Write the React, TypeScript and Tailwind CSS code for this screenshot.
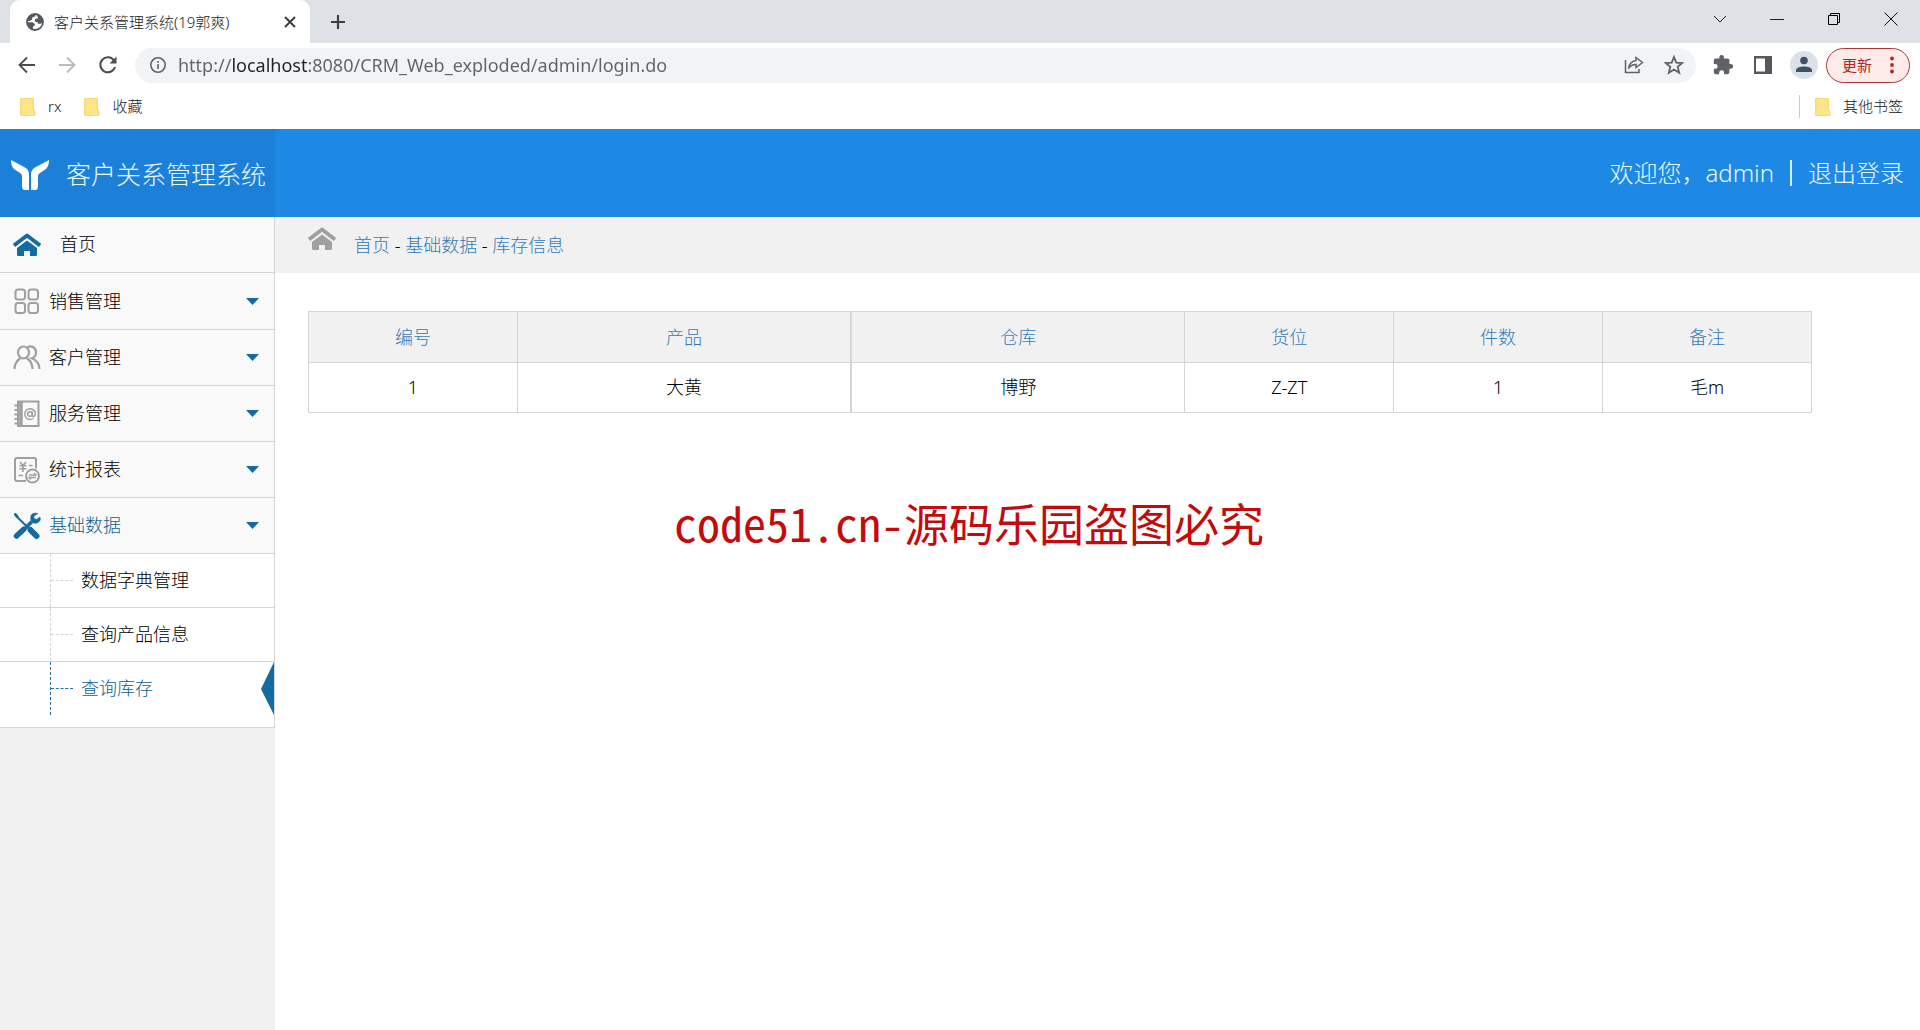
import React, { useState } from 'react';

type IconProps = { className?: string };

function GlobeIcon() {
  return (
    <svg viewBox="0 0 18 18" className="h-[18px] w-[18px] shrink-0" fill="none">
      <circle cx="9" cy="9" r="8" stroke="#55595e" strokeWidth="1.8" />
      <path d="M10 1.2 9 3.5 6.5 4.2 6 6.5 3.8 8 1.2 8 2 4.5 5.5 1.5Z" fill="#55595e" />
      <path d="M1.3 9.2 6.5 9.2 9 11 8.5 12.8 7 13.5 6.7 16.6 3 14.5Z" fill="#55595e" />
      <path d="M10.5 1.5 15 3.5 17 8 15.5 10.5 12.5 11 11.5 9.2 8.6 8.4 9.2 6 12.2 5.3Z" fill="#55595e" />
    </svg>
  );
}

function HouseIcon({ className }: IconProps) {
  return (
    <svg viewBox="0 0 28 24" className={className}>
      <path d="M1 12.500 14 2.500 27 12.500" fill="none" stroke="currentColor" strokeWidth="3.8" strokeLinejoin="round" />
      <path d="M14 7.500 24 15V21.5Q24 23 22.5 23H17V18H11V23H5.500Q4 23 4 21.500V15Z" fill="currentColor" />
    </svg>
  );
}

function GridIcon({ className }: IconProps) {
  return (
    <svg viewBox="0 0 28 28" className={className} fill="none" stroke="currentColor" strokeWidth="2">
      <rect x="2.500" y="1.500" width="9.500" height="10" rx="2.500" />
      <rect x="15.500" y="1.500" width="9.500" height="10" rx="2.500" />
      <rect x="2.500" y="15" width="9.500" height="10" rx="2.500" />
      <rect x="15.500" y="15" width="9.500" height="10" rx="2.500" />
    </svg>
  );
}

function PeopleIcon({ className }: IconProps) {
  return (
    <svg viewBox="0 0 28 28" className={className} fill="none" stroke="currentColor" strokeWidth="2.200">
      <ellipse cx="10.500" cy="8.500" rx="5.500" ry="6" />
      <path d="M1.500 25C1.500 20 3.500 17 7 14.500M14 14.500C18 17 19.500 20 19.500 25" />
      <path d="M14.500 3.200C19 .8 23 4 23 8.500 23 11.500 21.500 13.500 19 14.200 24 16.500 26.500 20 26.500 25" />
    </svg>
  );
}

function BookIcon({ className }: IconProps) {
  return (
    <svg viewBox="0 0 28 28" className={className} fill="none" stroke="currentColor">
      <rect x="5" y="1.500" width="20.500" height="24.500" strokeWidth="2" />
      <path d="M8 2V26" strokeWidth="3.500" />
      <path d="M1.500 5.500H7M1.500 10H7M1.500 14.500H7M1.500 19H7M1.500 23.500H7" strokeWidth="2.200" />
      <circle cx="17" cy="14" r="2.300" strokeWidth="1.500" />
      <path d="M19.300 11.500V15Q19.500 17 21 16.500 23 14.500 22 11.500 20 8.500 16.500 8.700 12 9.500 11.800 14 12 18.800 16.500 19.500 19 19.500 20.500 18.500" strokeWidth="1.400" />
    </svg>
  );
}

function ReportIcon({ className }: IconProps) {
  return (
    <svg viewBox="0 0 28 28" className={className} fill="none" stroke="currentColor" strokeWidth="2">
      <path d="M13 25H4Q2 25 2 23V4Q2 2 4 2H21Q23 2 23 4V12.500" />
      <path d="M7 6 10 9.500 13 6M6.500 9.800H13.500M6.500 12.800H13.500M10 9.500V16M16 9.500H19.500M5.500 19.500H10" strokeWidth="1.600" />
      <circle cx="19.500" cy="20" r="6.500" />
      <path d="M16 19H23L21 17M23 21.500H16L18 23.500" strokeWidth="1.300" />
    </svg>
  );
}

function ToolsIcon({ className }: IconProps) {
  return (
    <svg viewBox="0 0 28 28" className={className} fill="none" stroke="currentColor">
      <path d="M2 3 16 16.500" strokeWidth="2" />
      <path d="M1 2 3 1.500 5.500 5 4.500 6Z" fill="currentColor" strokeWidth="1" />
      <path d="M17.500 18 23.500 24" strokeWidth="6" strokeLinecap="round" />
      <path d="M3.500 24 10.500 17.500" strokeWidth="5.500" strokeLinecap="round" />
      <path d="M11 17.500 19 9.500" strokeWidth="3.500" />
      <path d="M25 1.500Q20 0 18 3.500 17 6 18 8.500L20.500 11Q25 12 27 8.500 27.800 6.500 27 5L23.500 7.500 21 6.500 21 4Z" fill="currentColor" strokeWidth=".5" />
    </svg>
  );
}

function FolderIcon() {
  return (
    <svg viewBox="0 0 16 20" className="h-5 w-4 shrink-0">
      <path d="M0 2Q0 1 1 1H13Q14 1 14 2V12L15.500 14.500V17.500Q15.500 19 14 19H1.500Q0 19 0 17.500Z" fill="#f7dc76" />
      <path d="M1.500 2H12.500V18H1.500Z" fill="#fee58a" />
      <path d="M13 14V18" stroke="#fff3b5" />
    </svg>
  );
}

const menus = [
  { label: '销售管理', icon: GridIcon },
  { label: '客户管理', icon: PeopleIcon },
  { label: '服务管理', icon: BookIcon },
  { label: '统计报表', icon: ReportIcon },
  { label: '基础数据', icon: ToolsIcon },
];

const subMenus = ['数据字典管理', '查询产品信息', '查询库存'];

const columns = ['编号', '产品', '仓库', '货位', '件数', '备注'];

const rows = [['1', '大黄', '博野', 'Z-ZT', '1', '毛m']];

function BrowserBar() {
  const [url, setUrl] = useState('http://localhost:8080/CRM_Web_exploded/admin/login.do');

  return (
    <div className="bg-white text-[15px] text-[#202124]">
      {/* Tab strip */}
      <div className="flex h-[43px] items-center bg-[#dee1e6] pl-[10px]">
        <div className="flex h-full w-[300px] items-center rounded-t-[10px] bg-white pr-[10px] pl-4">
          <GlobeIcon />
          <span className="ml-[10px] flex-1 pt-[2px] whitespace-nowrap">客户关系管理系统(19郭爽)</span>
          <button aria-label="关闭标签页" className="p-1">
            <svg viewBox="0 0 12 12" className="h-3 w-3" stroke="#3c4043" strokeWidth="2">
              <path d="M1 1 11 11M11 1 1 11" />
            </svg>
          </button>
        </div>
        <button aria-label="新标签页" className="ml-5">
          <svg viewBox="0 0 16 16" className="h-4 w-4" stroke="#3c4043" strokeWidth="2.200">
            <path d="M8 1V15M1 8H15" />
          </svg>
        </button>
        <div className="mr-[22px] ml-auto flex items-center gap-[43px] pb-[6px]">
          <button aria-label="搜索标签页">
            <svg viewBox="0 0 14 14" className="h-[14px] w-[14px]" fill="none" stroke="#202124">
              <path d="M1 4 7 10 13 4" />
            </svg>
          </button>
          <button aria-label="最小化">
            <svg viewBox="0 0 14 14" className="h-[14px] w-[14px]" stroke="#202124">
              <path d="M0 7.500H14" />
            </svg>
          </button>
          <button aria-label="还原">
            <svg viewBox="0 0 14 14" className="h-[14px] w-[14px]" fill="none" stroke="#000">
              <path d="M1.500 3.500H10.500V12.500H1.500ZM3.500 3.500V1.500H12.500V10.500H10.500" />
            </svg>
          </button>
          <button aria-label="关闭">
            <svg viewBox="0 0 14 14" className="h-[14px] w-[14px]" stroke="#000">
              <path d="M.5.500 13.500 13.500M13.500.500.5 13.500" />
            </svg>
          </button>
        </div>
      </div>

      {/* Address bar */}
      <div className="flex h-11 items-center pr-[10px] pl-[18px]">
        <button aria-label="后退">
          <svg viewBox="0 0 18 18" className="h-[18px] w-[18px]" fill="none" stroke="#4a4d51" strokeWidth="1.800">
            <path d="M17 9H2M9 1.500 1.500 9 9 16.500" />
          </svg>
        </button>
        <button aria-label="前进" className="ml-[22px]">
          <svg viewBox="0 0 18 18" className="h-[18px] w-[18px]" fill="none" stroke="#b9bbbe" strokeWidth="1.800">
            <path d="M1 9H16M9 1.500 16.500 9 9 16.500" />
          </svg>
        </button>
        <button aria-label="刷新" className="ml-[22px]">
          <svg viewBox="0 0 20 20" className="h-5 w-5" fill="none" stroke="#4a4d51" strokeWidth="2">
            <path d="M16 5.500A7.500 7.500 0 1 0 17 12" />
            <path d="M18.500 1.500V8.500H11.500Z" fill="#4a4d51" stroke="none" />
          </svg>
        </button>
        <div className="ml-[17px] flex h-[35px] flex-1 items-center rounded-full bg-[#f1f3f4] pr-3 pl-[14px]">
          <svg viewBox="0 0 18 18" className="h-[18px] w-[18px] shrink-0" fill="none" stroke="#5f6368" strokeWidth="1.600">
            <circle cx="9" cy="9" r="7.200" />
            <path d="M9 8V13M9 5V6.800" />
          </svg>
          {/* The host name is darker than the rest of the address */}
          <input
            type="text"
            aria-label="地址栏"
            value={url}
            onChange={(e) => setUrl(e.target.value)}
            className="ml-2 min-w-0 flex-1 bg-[linear-gradient(90deg,#5f6368_56px,#202124_56px,#202124_132px,#5f6368_132px)] bg-clip-text px-[3px] text-[18px] leading-[30px] font-normal text-transparent outline-none"
          />
          <button aria-label="分享">
            <svg viewBox="0 0 20 20" className="h-5 w-5" fill="none" stroke="#5f6368" strokeWidth="1.500">
              <path d="M1.500 5V17.500H15V14" />
              <path d="M12 2.500 18.500 7.500 12 12.500V9.500Q7 9.500 4.500 13.500 5.500 6.500 12 5.500Z" />
            </svg>
          </button>
          <button aria-label="收藏此页" className="ml-5">
            <svg viewBox="0 0 20 20" className="h-5 w-5" fill="none" stroke="#5f6368" strokeWidth="1.800">
              <path d="M10 2 12.300 7.600 18.300 8 13.700 11.900 15.200 17.700 10 14.500 4.800 17.700 6.300 11.900 1.700 8 7.700 7.600Z" />
            </svg>
          </button>
        </div>
        <button aria-label="扩展程序" className="ml-4">
          <svg viewBox="0 0 24 24" className="h-[22px] w-[22px]" fill="#5f6368">
            <path d="M20.500 11H19V7c0-1.100-.9-2-2-2h-4V3.500a2.500 2.500 0 0 0-5 0V5H4c-1.100 0-2 .9-2 2v3.800h1.500a2.700 2.700 0 0 1 0 5.400H2V20c0 1.100.9 2 2 2h3.800v-1.500a2.700 2.700 0 0 1 5.400 0V22H17c1.100 0 2-.9 2-2v-4h1.500a2.500 2.500 0 0 0 0-5z" />
          </svg>
        </button>
        <button aria-label="侧边栏" className="ml-5">
          <svg viewBox="0 0 18 18" className="h-[18px] w-[18px]">
            <path d="M0 0H18V18H0ZM2 2.500V15.500H11V2.500Z" fill="#55595e" fillRule="evenodd" />
          </svg>
        </button>
        <button aria-label="个人资料" className="ml-[18px]">
          <svg viewBox="0 0 28 28" className="h-7 w-7">
            <circle cx="14" cy="14" r="14" fill="#dce0e8" />
            <circle cx="14" cy="9.500" r="3.800" fill="#40506a" />
            <path d="M6 21V19Q6.500 15.500 14 15.500 21.500 15.500 22 19V21Z" fill="#40506a" />
          </svg>
        </button>
        <button className="ml-2 flex h-[35px] w-[84px] items-center justify-between rounded-full border border-[#a83a36] bg-[#fcebe9] px-[15px] text-[15px] font-normal text-[#b3261e]">
          更新
          <svg viewBox="0 0 4 18" className="h-[18px] w-1" fill="#b3261e">
            <circle cx="2" cy="2.500" r="1.900" />
            <circle cx="2" cy="9" r="1.900" />
            <circle cx="2" cy="15.500" r="1.900" />
          </svg>
        </button>
      </div>

      {/* Bookmarks */}
      <div className="flex h-[42px] items-center pr-[17px] pb-[3px] pl-5">
        <a href="#rx" className="flex items-center gap-3">
          <FolderIcon />
          rx
        </a>
        <a href="#fav" className="ml-[23px] flex items-center gap-3">
          <FolderIcon />
          收藏
        </a>
        <a href="#others" className="ml-auto flex items-center gap-3 border-l border-[#c8cacd] pl-[15px]">
          <FolderIcon />
          其他书签
        </a>
      </div>
    </div>
  );
}

function Sidebar() {
  const [openMenu, setOpenMenu] = useState('基础数据');
  const [current, setCurrent] = useState('查询库存');

  return (
    <nav className="w-[275px] shrink-0 bg-[#f0f0f0]">
      <div className="border-r border-[#d5d5d5] bg-[#f9f9f9]">
        <a href="#home" className="mb-px flex h-14 items-center border-b border-[#d5d5d5] pl-[13px] text-black">
          <HouseIcon className="h-6 w-7 text-[#136ba0]" />
          <span className="ml-[19px]">首页</span>
        </a>
        {menus.map(({ label, icon: Icon }) => {
          const isOpen = openMenu === label;
          return (
            <div key={label}>
              <button
                onClick={() => setOpenMenu(isOpen ? '' : label)}
                className={`flex h-14 w-full items-center border-b border-[#d5d5d5] pr-[15px] pl-[13px] ${
                  isOpen ? 'text-[#0e6090]' : 'text-black'
                }`}
              >
                <Icon className={`h-7 w-7 ${isOpen ? 'text-[#136ba0]' : 'text-[#a0a0a0]'}`} />
                <span className="ml-2">{label}</span>
                <svg viewBox="0 0 13 7" className="ml-auto h-[7px] w-[13px] fill-[#136ba0]">
                  <path d="M0 0H13L6.500 7Z" />
                </svg>
              </button>
              {isOpen && (
                <ul className="border-b border-[#d5d5d5] bg-white pb-3">
                  {subMenus.map((item) => {
                    const isCurrent = item === current;
                    return (
                      <li key={item} className="border-b border-[#d5d5d5] last:border-b-0">
                        <a
                          href="#stock"
                          onClick={() => setCurrent(item)}
                          className={`flex h-[53px] items-center ${isCurrent ? 'text-[#0e6090]' : 'text-black'}`}
                        >
                          <span
                            className={`ml-[50px] flex h-full w-[23px] items-center border-l border-dashed ${
                              isCurrent ? 'border-[#23719c]' : 'border-[#d5d5d5]'
                            }`}
                          >
                            <span
                              className={`w-full border-t border-dashed ${
                                isCurrent ? 'border-[#23719c]' : 'border-[#d5d5d5]'
                              }`}
                            />
                          </span>
                          <span className="ml-2">{item}</span>
                          {isCurrent && (
                            <svg viewBox="0 0 13 53" className="ml-auto h-[53px] w-[13px] fill-[#136ba0]">
                              <path d="M13 0V53L0 27Z" />
                            </svg>
                          )}
                        </a>
                      </li>
                    );
                  })}
                </ul>
              )}
            </div>
          );
        })}
      </div>
    </nav>
  );
}

export default function App() {
  return (
    <div className="flex min-h-screen flex-col bg-white font-['Noto_Sans','Noto_Sans_CJK_SC',sans-serif] text-[18px] font-light">
      <BrowserBar />

      <header className="flex h-[88px] items-stretch bg-[#1e88e5] text-[#e8f9ff]">
        <div className="flex w-[275px] items-center bg-[#1d80d8] pl-[11px]">
          <svg viewBox="0 0 38 30" className="mt-1 h-[30px] w-[38px]" fill="#fff">
            <path d="M0 0 14 7.500Q18 10 18 14V30H13Q11 29 11 26V16Q11 14 9 13L3 9Q0 6 0 0Z" />
            <path d="M38 0 24 7.500Q20 10 20 14V30H25Q27 29 27 26V16Q27 14 29 13L35 9Q38 6 38 0Z" />
          </svg>
          <h1 className="ml-[17px] pt-1 text-[25px] whitespace-nowrap">客户关系管理系统</h1>
        </div>
        <div className="ml-auto flex items-center pr-4 text-2xl">
          <span>欢迎您，admin</span>
          <span className="mx-4 h-[26px] w-[2px] bg-[#d5f1ff]" />
          <a href="#logout">退出登录</a>
        </div>
      </header>

      <div className="flex flex-1">
        <Sidebar />

        <main className="relative min-w-0 flex-1">
          <div className="flex h-14 items-center bg-[#f1f1f1] pl-[33px] text-[#337ab7]">
            <HouseIcon className="mb-3 h-6 w-7 text-[#a0a0a0]" />
            <div className="ml-[18px] whitespace-pre">
              <a href="#home">首页</a>
              <span className="text-black"> - </span>
              <a href="#data">基础数据</a>
              <span className="text-black"> - </span>
              <a href="#stock">库存信息</a>
            </div>
          </div>

          <div className="pt-[38px] pr-[108px] pl-[33px]">
            <table className="w-full table-fixed border-collapse text-center">
              <colgroup>
                <col className="w-[13.9%]" />
                <col className="w-[22.2%]" />
                <col className="w-[22.2%]" />
                <col className="w-[13.9%]" />
                <col className="w-[13.9%]" />
                <col className="w-[13.9%]" />
              </colgroup>
              <thead>
                <tr className="h-[51px] bg-[#f1f1f1] text-[#337ab7]">
                  {columns.map((column) => (
                    <th key={column} className="border border-[#d5d5d5] font-light nth-2:border-r-2">{column}</th>
                  ))}
                </tr>
              </thead>
              <tbody>
                {rows.map((row) => (
                  <tr key={row[0]} className="h-[50px] text-black">
                    {row.map((cell, i) => (
                      <td key={columns[i]} className="border border-[#d5d5d5] nth-2:border-r-2">{cell}</td>
                    ))}
                  </tr>
                ))}
              </tbody>
            </table>
          </div>

          {/* Watermark */}
          <div className="pointer-events-none absolute top-[272px] left-[399px] font-['Noto_Sans_Mono_CJK_SC','Noto_Sans_CJK_SC',monospace] text-[45px] leading-[66px] font-normal whitespace-nowrap text-[#c40b0b]">
            <span className="text-[46px]">code51.cn-</span>源码乐园盗图必究
          </div>
        </main>
      </div>
    </div>
  );
}
